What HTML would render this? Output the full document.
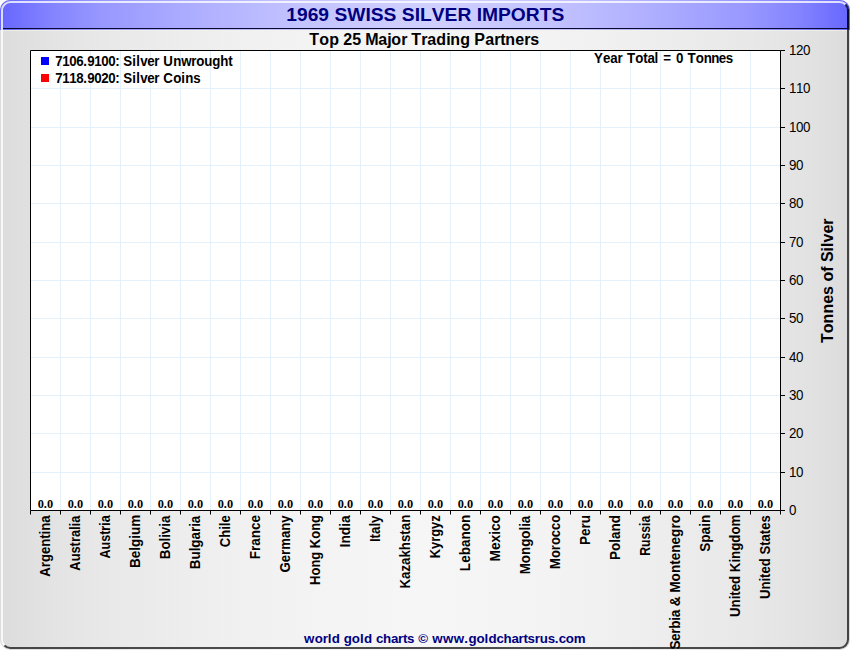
<!DOCTYPE html>
<html lang="en"><head><meta charset="utf-8"><title>1969 Swiss Silver Imports</title>
<style>
html,body{margin:0;padding:0;background:#fff;}
body{width:850px;height:650px;overflow:hidden;}
svg{display:block;}
text{font-family:"Liberation Sans",Arial,sans-serif;font-kerning:none;}
.b{font-weight:bold;}
.ser{font-family:"Liberation Serif","Times New Roman",serif;font-weight:bold;}
</style></head><body>
<svg width="850" height="650" viewBox="0 0 850 650">
<defs>
<linearGradient id="bg" x1="0" y1="0" x2="1" y2="0"><stop offset="0.000" stop-color="#dcdcdc"/><stop offset="0.059" stop-color="#e3e3e3"/><stop offset="0.118" stop-color="#e8e8e8"/><stop offset="0.235" stop-color="#eeeeee"/><stop offset="0.353" stop-color="#f3f3f3"/><stop offset="0.500" stop-color="#f6f6f6"/><stop offset="0.647" stop-color="#f3f3f3"/><stop offset="0.765" stop-color="#eeeeee"/><stop offset="0.882" stop-color="#e8e8e8"/><stop offset="0.941" stop-color="#e3e3e3"/><stop offset="1.000" stop-color="#dcdcdc"/></linearGradient>
<linearGradient id="tb" x1="0" y1="0" x2="1" y2="0"><stop offset="0.000" stop-color="#6666ff"/><stop offset="0.059" stop-color="#8383ff"/><stop offset="0.118" stop-color="#9797ff"/><stop offset="0.235" stop-color="#afafff"/><stop offset="0.353" stop-color="#c3c3ff"/><stop offset="0.500" stop-color="#d0d0ff"/><stop offset="0.647" stop-color="#c3c3ff"/><stop offset="0.765" stop-color="#afafff"/><stop offset="0.882" stop-color="#9797ff"/><stop offset="0.941" stop-color="#8383ff"/><stop offset="1.000" stop-color="#6666ff"/></linearGradient>
<clipPath id="fr"><rect x="0" y="0" width="850" height="650" rx="10" ry="10"/></clipPath>
<clipPath id="tl"><polygon points="0,0 850,0 825,25 25,25 25,625 0,650"/></clipPath>
<clipPath id="br"><polygon points="850,0 850,650 0,650 25,625 825,625 825,25"/></clipPath>
</defs>
<g clip-path="url(#fr)">
<rect x="0" y="0" width="850" height="650" fill="url(#bg)"/>
<rect x="0" y="0" width="850" height="30" fill="url(#tb)"/>
<rect x="3" y="28" width="844" height="1" fill="#0a0a30"/>
<rect x="3" y="30" width="844" height="1" fill="#f4f4e8" opacity="0.7"/>
</g>
<g fill="none" stroke-width="2">
<rect x="2" y="2" width="846" height="646" rx="8.5" ry="8.5" stroke="#ffffff" stroke-opacity="0.78" clip-path="url(#tl)"/>
<rect x="2" y="2" width="846" height="646" rx="8.5" ry="8.5" stroke="#000000" stroke-opacity="0.69" clip-path="url(#br)"/>
<rect x="847" y="9" width="2" height="20" fill="#000018" opacity="0.6"/>
</g>

<text transform="translate(425.30,21.30) scale(1.0694,1)" x="-130.03 -120.02 -110.01 -100.00 -89.99 -84.99 -72.98 -56.00 -50.99 -38.99 -26.98 -21.98 -9.98 -4.97 6.02 18.03 30.03 43.03 48.03 53.03 68.03 80.03 94.03 107.03 118.03" y="0" class="b" font-size="18" fill="#000080">1969 SWISS SILVER IMPORTS</text>
<text transform="translate(424.20,45.00) scale(1.0000,1)" x="-115.00 -105.00 -95.00 -85.00 -81.00 -72.00 -63.00 -59.00 -46.00 -37.00 -33.00 -23.00 -17.00 -13.00 -3.00 3.00 12.00 22.00 26.00 36.00 46.00 50.00 61.00 70.00 76.00 81.00 91.00 100.00 106.00" y="0" class="b" font-size="16" fill="#000">Top 25 Major Trading Partners</text>
<rect x="30" y="50" width="750" height="460" fill="#fff"/>
<path d="M30 472H780 M30 433H780 M30 395H780 M30 357H780 M30 318H780 M30 280H780 M30 242H780 M30 203H780 M30 165H780 M30 127H780 M30 88H780 M60 50V510 M90 50V510 M120 50V510 M150 50V510 M180 50V510 M210 50V510 M240 50V510 M270 50V510 M300 50V510 M330 50V510 M360 50V510 M390 50V510 M420 50V510 M450 50V510 M480 50V510 M510 50V510 M540 50V510 M570 50V510 M600 50V510 M630 50V510 M660 50V510 M690 50V510 M720 50V510 M750 50V510" stroke="#e5f1fa" stroke-width="1" fill="none" transform="translate(0.5,0.5)"/>
<path d="M30 510V50H780V510H30" stroke="#000" stroke-width="1" fill="none" transform="translate(0.5,0.5)"/>
<text transform="translate(789.00,515.20) scale(0.9324,1)" x="0.00" y="0" font-size="14.3" fill="#000">0</text>
<text transform="translate(789.00,477.20) scale(0.9324,1)" x="0.00 7.51" y="0" font-size="14.3" fill="#000">10</text>
<text transform="translate(789.00,438.20) scale(0.9324,1)" x="0.00 7.51" y="0" font-size="14.3" fill="#000">20</text>
<text transform="translate(789.00,400.20) scale(0.9324,1)" x="0.00 7.51" y="0" font-size="14.3" fill="#000">30</text>
<text transform="translate(789.00,362.20) scale(0.9324,1)" x="0.00 7.51" y="0" font-size="14.3" fill="#000">40</text>
<text transform="translate(789.00,323.20) scale(0.9324,1)" x="0.00 7.51" y="0" font-size="14.3" fill="#000">50</text>
<text transform="translate(789.00,285.20) scale(0.9324,1)" x="0.00 7.51" y="0" font-size="14.3" fill="#000">60</text>
<text transform="translate(789.00,247.20) scale(0.9324,1)" x="0.00 7.51" y="0" font-size="14.3" fill="#000">70</text>
<text transform="translate(789.00,208.20) scale(0.9324,1)" x="0.00 7.51" y="0" font-size="14.3" fill="#000">80</text>
<text transform="translate(789.00,170.20) scale(0.9324,1)" x="0.00 7.51" y="0" font-size="14.3" fill="#000">90</text>
<text transform="translate(789.00,132.20) scale(0.9324,1)" x="0.00 7.51 15.02" y="0" font-size="14.3" fill="#000">100</text>
<text transform="translate(789.00,93.20) scale(0.9324,1)" x="0.00 7.51 15.02" y="0" font-size="14.3" fill="#000">110</text>
<text transform="translate(789.00,55.20) scale(0.9324,1)" x="0.00 7.51 15.02" y="0" font-size="14.3" fill="#000">120</text>
<path d="M780 510h4.5 M780 472h4.5 M780 433h4.5 M780 395h4.5 M780 357h4.5 M780 318h4.5 M780 280h4.5 M780 242h4.5 M780 203h4.5 M780 165h4.5 M780 127h4.5 M780 88h4.5 M780 50h4.5 M30 510v4 M60 510v4 M90 510v4 M120 510v4 M150 510v4 M180 510v4 M210 510v4 M240 510v4 M270 510v4 M300 510v4 M330 510v4 M360 510v4 M390 510v4 M420 510v4 M450 510v4 M480 510v4 M510 510v4 M540 510v4 M570 510v4 M600 510v4 M630 510v4 M660 510v4 M690 510v4 M720 510v4 M750 510v4 M780 510v4" stroke="#000" stroke-width="1" fill="none" transform="translate(0.5,0.5)"/>
<text transform="translate(45.40,508.00) scale(0.9762,1)" x="-7.88 -1.58 1.58" y="0" class="ser" font-size="12.6" fill="#000">0.0</text>
<text transform="translate(49.60,515.42) rotate(-90) scale(0.9246,1)" x="-66.27 -56.02 -50.49 -41.82 -33.92 -25.25 -20.52 -16.57 -7.90" y="0" class="b" font-size="14.2" fill="#000">Argentina</text>
<text transform="translate(75.40,508.00) scale(0.9762,1)" x="-7.88 -1.58 1.58" y="0" class="ser" font-size="12.6" fill="#000">0.0</text>
<text transform="translate(79.60,515.68) rotate(-90) scale(0.9047,1)" x="-60.77 -50.51 -41.84 -33.94 -29.21 -23.69 -15.79 -11.84 -7.90" y="0" class="b" font-size="14.2" fill="#000">Australia</text>
<text transform="translate(105.40,508.00) scale(0.9762,1)" x="-7.88 -1.58 1.58" y="0" class="ser" font-size="12.6" fill="#000">0.0</text>
<text transform="translate(109.60,515.30) rotate(-90) scale(0.8853,1)" x="-48.92 -38.67 -29.99 -22.10 -17.37 -11.84 -7.90" y="0" class="b" font-size="14.2" fill="#000">Austria</text>
<text transform="translate(135.40,508.00) scale(0.9762,1)" x="-7.88 -1.58 1.58" y="0" class="ser" font-size="12.6" fill="#000">0.0</text>
<text transform="translate(139.60,514.58) rotate(-90) scale(0.9545,1)" x="-56.02 -45.76 -37.86 -33.92 -25.25 -21.30 -12.63" y="0" class="b" font-size="14.2" fill="#000">Belgium</text>
<text transform="translate(165.40,508.00) scale(0.9762,1)" x="-7.88 -1.58 1.58" y="0" class="ser" font-size="12.6" fill="#000">0.0</text>
<text transform="translate(169.60,515.69) rotate(-90) scale(0.9345,1)" x="-46.56 -36.30 -27.63 -23.69 -19.74 -11.84 -7.90" y="0" class="b" font-size="14.2" fill="#000">Bolivia</text>
<text transform="translate(195.40,508.00) scale(0.9762,1)" x="-7.88 -1.58 1.58" y="0" class="ser" font-size="12.6" fill="#000">0.0</text>
<text transform="translate(199.60,515.72) rotate(-90) scale(0.9406,1)" x="-56.81 -46.56 -37.89 -33.94 -25.27 -17.37 -11.84 -7.90" y="0" class="b" font-size="14.2" fill="#000">Bulgaria</text>
<text transform="translate(225.40,508.00) scale(0.9762,1)" x="-7.88 -1.58 1.58" y="0" class="ser" font-size="12.6" fill="#000">0.0</text>
<text transform="translate(229.60,515.26) rotate(-90) scale(0.9183,1)" x="-34.72 -24.46 -15.79 -11.84 -7.90" y="0" class="b" font-size="14.2" fill="#000">Chile</text>
<text transform="translate(255.40,508.00) scale(0.9762,1)" x="-7.88 -1.58 1.58" y="0" class="ser" font-size="12.6" fill="#000">0.0</text>
<text transform="translate(259.60,514.91) rotate(-90) scale(0.9515,1)" x="-46.57 -37.89 -32.37 -24.47 -15.79 -7.90" y="0" class="b" font-size="14.2" fill="#000">France</text>
<text transform="translate(285.40,508.00) scale(0.9762,1)" x="-7.88 -1.58 1.58" y="0" class="ser" font-size="12.6" fill="#000">0.0</text>
<text transform="translate(289.60,515.41) rotate(-90) scale(0.9264,1)" x="-61.56 -50.52 -42.62 -37.09 -24.47 -16.57 -7.90" y="0" class="b" font-size="14.2" fill="#000">Germany</text>
<text transform="translate(315.40,508.00) scale(0.9762,1)" x="-7.88 -1.58 1.58" y="0" class="ser" font-size="12.6" fill="#000">0.0</text>
<text transform="translate(319.60,514.98) rotate(-90) scale(0.9142,1)" x="-76.50 -66.24 -57.57 -48.90 -40.22 -36.28 -26.02 -17.35 -8.67" y="0" class="b" font-size="14.2" fill="#000">Hong Kong</text>
<text transform="translate(345.40,508.00) scale(0.9762,1)" x="-7.88 -1.58 1.58" y="0" class="ser" font-size="12.6" fill="#000">0.0</text>
<text transform="translate(349.60,515.42) rotate(-90) scale(0.9649,1)" x="-33.14 -29.19 -20.52 -11.84 -7.90" y="0" class="b" font-size="14.2" fill="#000">India</text>
<text transform="translate(375.40,508.00) scale(0.9762,1)" x="-7.88 -1.58 1.58" y="0" class="ser" font-size="12.6" fill="#000">0.0</text>
<text transform="translate(379.60,515.50) rotate(-90) scale(0.9360,1)" x="-28.41 -24.47 -19.74 -11.84 -7.90" y="0" class="b" font-size="14.2" fill="#000">Italy</text>
<text transform="translate(405.40,508.00) scale(0.9762,1)" x="-7.88 -1.58 1.58" y="0" class="ser" font-size="12.6" fill="#000">0.0</text>
<text transform="translate(409.60,514.78) rotate(-90) scale(0.9337,1)" x="-78.92 -68.66 -60.77 -53.67 -45.77 -37.87 -29.20 -21.30 -16.57 -8.67" y="0" class="b" font-size="14.2" fill="#000">Kazakhstan</text>
<text transform="translate(435.40,508.00) scale(0.9762,1)" x="-7.88 -1.58 1.58" y="0" class="ser" font-size="12.6" fill="#000">0.0</text>
<text transform="translate(439.60,515.38) rotate(-90) scale(0.9064,1)" x="-47.35 -37.09 -29.20 -23.67 -15.00 -7.10" y="0" class="b" font-size="14.2" fill="#000">Kyrgyz</text>
<text transform="translate(465.40,508.00) scale(0.9762,1)" x="-7.88 -1.58 1.58" y="0" class="ser" font-size="12.6" fill="#000">0.0</text>
<text transform="translate(469.60,514.78) rotate(-90) scale(0.9527,1)" x="-59.16 -50.49 -42.59 -33.92 -26.02 -17.35 -8.67" y="0" class="b" font-size="14.2" fill="#000">Lebanon</text>
<text transform="translate(495.40,508.00) scale(0.9762,1)" x="-7.88 -1.58 1.58" y="0" class="ser" font-size="12.6" fill="#000">0.0</text>
<text transform="translate(499.60,515.02) rotate(-90) scale(0.9653,1)" x="-48.14 -36.31 -28.41 -20.52 -16.57 -8.67" y="0" class="b" font-size="14.2" fill="#000">Mexico</text>
<text transform="translate(525.40,508.00) scale(0.9762,1)" x="-7.88 -1.58 1.58" y="0" class="ser" font-size="12.6" fill="#000">0.0</text>
<text transform="translate(529.60,515.71) rotate(-90) scale(0.9404,1)" x="-62.31 -50.48 -41.81 -33.14 -24.46 -15.79 -11.84 -7.90" y="0" class="b" font-size="14.2" fill="#000">Mongolia</text>
<text transform="translate(555.40,508.00) scale(0.9762,1)" x="-7.88 -1.58 1.58" y="0" class="ser" font-size="12.6" fill="#000">0.0</text>
<text transform="translate(559.60,514.70) rotate(-90) scale(0.9166,1)" x="-59.17 -47.34 -38.67 -33.14 -24.47 -16.57 -8.67" y="0" class="b" font-size="14.2" fill="#000">Morocco</text>
<text transform="translate(585.40,508.00) scale(0.9762,1)" x="-7.88 -1.58 1.58" y="0" class="ser" font-size="12.6" fill="#000">0.0</text>
<text transform="translate(589.60,514.92) rotate(-90) scale(0.9560,1)" x="-31.57 -22.10 -14.20 -8.67" y="0" class="b" font-size="14.2" fill="#000">Peru</text>
<text transform="translate(615.40,508.00) scale(0.9762,1)" x="-7.88 -1.58 1.58" y="0" class="ser" font-size="12.6" fill="#000">0.0</text>
<text transform="translate(619.60,514.98) rotate(-90) scale(0.9513,1)" x="-47.34 -37.86 -29.19 -25.25 -17.35 -8.67" y="0" class="b" font-size="14.2" fill="#000">Poland</text>
<text transform="translate(645.40,508.00) scale(0.9762,1)" x="-7.88 -1.58 1.58" y="0" class="ser" font-size="12.6" fill="#000">0.0</text>
<text transform="translate(649.60,515.72) rotate(-90) scale(0.8622,1)" x="-46.57 -36.31 -27.64 -19.74 -11.84 -7.90" y="0" class="b" font-size="14.2" fill="#000">Russia</text>
<text transform="translate(675.40,508.00) scale(0.9762,1)" x="-7.88 -1.58 1.58" y="0" class="ser" font-size="12.6" fill="#000">0.0</text>
<text transform="translate(679.60,515.00) rotate(-90) scale(0.9568,1)" x="-140.67 -131.63 -124.09 -118.81 -110.53 -106.76 -99.22 -95.45 -85.19 -81.25 -69.42 -60.75 -52.07 -47.34 -39.45 -30.77 -22.87 -14.20 -8.67" y="0" class="b" font-size="14.2" fill="#000">Serbia &amp; Montenegro</text>
<text transform="translate(705.40,508.00) scale(0.9762,1)" x="-7.88 -1.58 1.58" y="0" class="ser" font-size="12.6" fill="#000">0.0</text>
<text transform="translate(709.60,514.78) rotate(-90) scale(0.9584,1)" x="-38.66 -29.19 -20.52 -12.62 -8.67" y="0" class="b" font-size="14.2" fill="#000">Spain</text>
<text transform="translate(735.40,508.00) scale(0.9762,1)" x="-7.88 -1.58 1.58" y="0" class="ser" font-size="12.6" fill="#000">0.0</text>
<text transform="translate(739.60,514.76) rotate(-90) scale(0.9327,1)" x="-109.64 -99.39 -90.71 -86.77 -82.04 -74.14 -65.47 -61.52 -51.27 -47.32 -38.65 -29.97 -21.30 -12.63" y="0" class="b" font-size="14.2" fill="#000">United Kingdom</text>
<text transform="translate(765.40,508.00) scale(0.9762,1)" x="-7.88 -1.58 1.58" y="0" class="ser" font-size="12.6" fill="#000">0.0</text>
<text transform="translate(769.60,515.29) rotate(-90) scale(0.9225,1)" x="-90.74 -80.49 -71.81 -67.87 -63.14 -55.24 -46.57 -42.62 -33.15 -28.42 -20.52 -15.79 -7.90" y="0" class="b" font-size="14.2" fill="#000">United States</text>
<rect x="41" y="57" width="8" height="8" fill="#0000ff"/>
<rect x="41" y="74" width="8" height="8" fill="#ff0000"/>
<text transform="translate(55.30,66.00) scale(0.9592,1)" x="0.00 7.30 14.60 21.89 29.19 33.36 40.66 47.96 55.25 62.55 66.72 70.89 80.27 84.44 88.61 95.91 103.21 108.42 112.59 123.02 131.36 141.78 147.00 155.34 163.68 172.02 180.36" y="0" class="b" font-size="13.9" fill="#000">7106.9100: Silver Unwrought</text>
<text transform="translate(55.30,83.00) scale(0.9592,1)" x="0.00 7.30 14.60 21.89 29.19 33.36 40.66 47.96 55.25 62.55 66.72 70.89 80.27 84.44 88.61 95.91 103.21 108.42 112.59 123.02 131.36 135.53 143.87" y="0" class="b" font-size="13.9" fill="#000">7118.9020: Silver Coins</text>
<text transform="translate(594.00,63.00) scale(0.9662,1)" x="0.00 9.45 16.83 24.21 29.52 34.21 42.62 51.04 55.31 62.69 66.97 71.65 80.07 84.76 92.14 96.83 105.24 113.66 121.35 129.04 136.42" y="0" class="b" font-size="13.8" fill="#000">Year Total = 0 Tonnes</text>
<text transform="translate(833.00,280.70) rotate(-90) scale(0.9412,1)" x="-66.12 -55.74 -45.36 -34.97 -24.59 -15.13 -5.68 -0.95 9.43 15.09 19.81 31.15 35.88 40.60 50.05 59.51" y="0" class="b" font-size="17" fill="#000">Tonnes of Silver</text>
<text transform="translate(304.00,642.70) scale(0.9950,1)" x="0.00 10.78 18.84 23.89 27.94 36.01 40.05 48.12 56.18 60.23 68.29 72.34 79.40 87.46 94.52 99.57 103.62 110.68 114.72 124.80 128.84 139.62 150.40 161.18 165.23 173.29 181.36 185.40 193.47 200.53 208.59 215.65 220.70 224.75 231.81 236.86 244.92 251.98 256.03 263.09 271.16" y="0" class="b" font-size="13.4" fill="#000080">world gold charts © www.goldchartsrus.com</text>
</svg></body></html>
